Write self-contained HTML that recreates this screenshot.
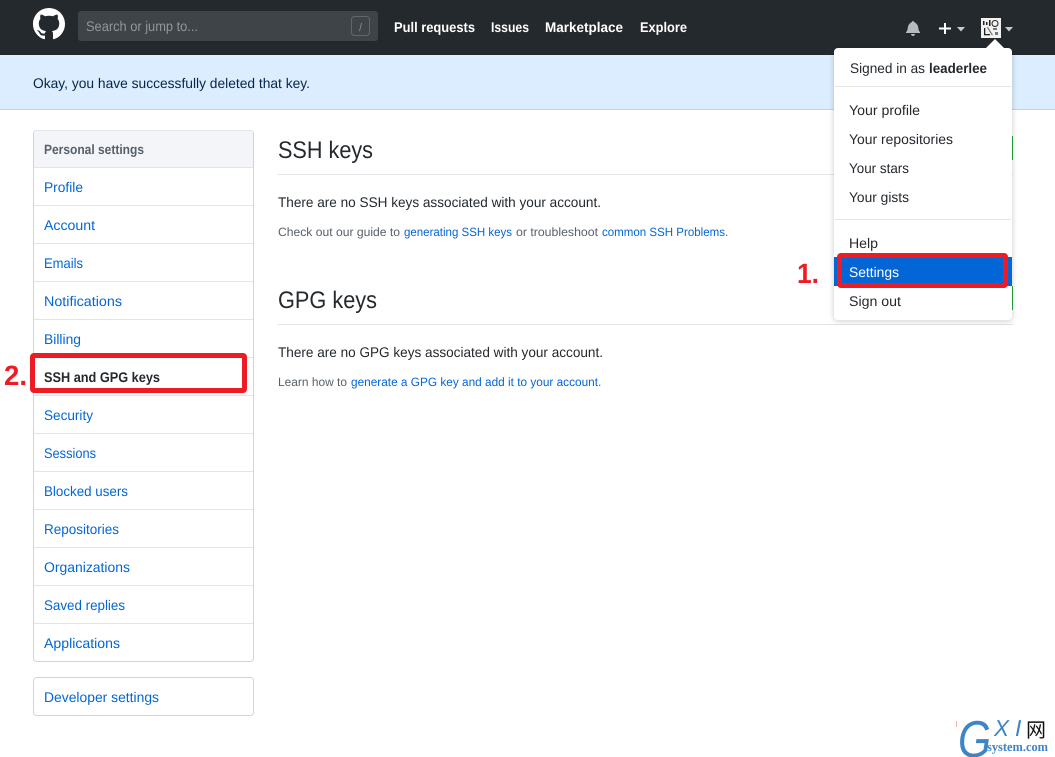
<!DOCTYPE html>
<html><head><meta charset="utf-8"><title>SSH and GPG keys</title>
<style>
html,body{margin:0;padding:0;background:#fff;width:1055px;height:757px;overflow:hidden}
svg{display:block}
text{font-family:"Liberation Sans","Noto Sans CJK SC",sans-serif;font-size:14px;fill:#24292e;text-rendering:geometricPrecision}
.l{fill:#0366d6}
.n{fill:#fff;font-weight:bold}
.s{font-size:12px;fill:#586069}
.sl{font-size:12px;fill:#0366d6}
</style></head><body>
<svg width="1055" height="757" viewBox="0 0 1055 757" xmlns="http://www.w3.org/2000/svg">
<defs><filter id="sh" x="-10%" y="-10%" width="120%" height="120%"><feDropShadow dx="0" dy="1" stdDeviation="3" flood-color="#1b1f23" flood-opacity=".22"/></filter></defs>
<rect width="1055" height="757" fill="#fff"/>
<!-- flash -->
<rect x="0" y="55" width="1055" height="54" fill="#dbedff"/>
<rect x="0" y="109" width="1055" height="1" fill="#c0d3eb"/>
<text x="33" y="88" textLength="277" lengthAdjust="spacingAndGlyphs" style="fill:#05264c">Okay, you have successfully deleted that key.</text>
<!-- header -->
<rect x="0" y="0" width="1055" height="55" fill="#24292e"/>
<g transform="translate(33 8) scale(2)"><path fill="#fff" d="M8 0C3.58 0 0 3.58 0 8c0 3.54 2.29 6.53 5.47 7.59.4.07.55-.17.55-.38 0-.19-.01-.82-.01-1.49-2.01.37-2.53-.49-2.69-.94-.09-.23-.48-.94-.82-1.13-.28-.15-.68-.52-.01-.53.63-.01 1.08.58 1.23.82.72 1.21 1.87.87 2.33.66.07-.52.28-.87.51-1.07-1.78-.2-3.64-.89-3.64-3.95 0-.87.31-1.59.82-2.15-.08-.2-.36-1.02.08-2.12 0 0 .67-.21 2.2.82.64-.18 1.32-.27 2-.27.68 0 1.36.09 2 .27 1.53-1.04 2.2-.82 2.2-.82.44 1.1.16 1.92.08 2.12.51.56.82 1.27.82 2.15 0 3.07-1.87 3.75-3.65 3.95.29.25.54.73.54 1.48 0 1.07-.01 1.93-.01 2.2 0 .21.15.46.55.38A8.013 8.013 0 0016 8c0-4.42-3.58-8-8-8z"/></g>
<rect x="78" y="11" width="300" height="30" rx="3" fill="#3f4448"/>
<text x="86" y="31" textLength="112" lengthAdjust="spacingAndGlyphs" style="fill:#92969a">Search or jump to...</text>
<rect x="351.500" y="16.500" width="18" height="19" rx="3" fill="none" stroke="#63676b"/>
<text x="359" y="31" style="font-size:11px;fill:#8a8e92">/</text>
<text class="n" x="394" y="32" textLength="81" lengthAdjust="spacingAndGlyphs">Pull requests</text>
<text class="n" x="491" y="32" textLength="38" lengthAdjust="spacingAndGlyphs">Issues</text>
<text class="n" x="545" y="32" textLength="78" lengthAdjust="spacingAndGlyphs">Marketplace</text>
<text class="n" x="640" y="32" textLength="47" lengthAdjust="spacingAndGlyphs">Explore</text>
<g transform="translate(906 20)"><path fill="#b8babc" d="M14 12v1H0v-1l.73-.58c.77-.77.81-2.55 1.19-4.42C2.69 3.23 6 2 6 2c0-.55.45-1 1-1s1 .45 1 1c0 0 3.39 1.23 4.16 5 .38 1.880 .42 3.660 1.190 4.420l.66.58H14zm-7 4c1.110 0 2-.89 2-2H5c0 1.110.89 2 2 2z"/></g>
<path fill="#fff" d="M944 23h2v4.500h5v2h-5V34h-2v-4.500h-5v-2h5z"/>
<path fill="#c8cacb" d="M957 27h8l-4 4.500z"/>
<!-- avatar -->
<rect x="981" y="18" width="20" height="20" fill="#f2f2f2"/>
<g fill="#222">
<rect x="983" y="21" width="1.500" height="4"/><rect x="986" y="22" width="1.500" height="3"/><rect x="989" y="20" width="1.500" height="6"/>
<circle cx="995" cy="23.500" r="3" fill="none" stroke="#222" stroke-width="1"/>
<rect x="984" y="28" width="1.300" height="7"/><rect x="984" y="34" width="6" height="1.300"/>
<path d="M988 27l5 8-1.200.4-5-8zM993 28h4v2h-4zM995 32h3v3h-3z" fill="#777"/>
</g>
<path fill="#c8cacb" d="M1005 27h8l-4 4.500z"/>
<!-- sidebar -->
<rect x="33.500" y="130.500" width="220" height="531" rx="3" fill="#fff" stroke="#d1d5da"/>
<path d="M34 167V133a2.500 2.500 0 0 1 2.500-2.500H250.500a2.500 2.500 0 0 1 2.500 2.500V167z" fill="#f3f5f8"/>
<g fill="#e1e4e8">
<rect x="34" y="167" width="219" height="1"/><rect x="34" y="205" width="219" height="1"/><rect x="34" y="243" width="219" height="1"/><rect x="34" y="281" width="219" height="1"/><rect x="34" y="319" width="219" height="1"/><rect x="34" y="357" width="219" height="1"/><rect x="34" y="395" width="219" height="1"/><rect x="34" y="433" width="219" height="1"/><rect x="34" y="471" width="219" height="1"/><rect x="34" y="509" width="219" height="1"/><rect x="34" y="547" width="219" height="1"/><rect x="34" y="585" width="219" height="1"/><rect x="34" y="623" width="219" height="1"/>
</g>
<text x="44" y="154" textLength="100" lengthAdjust="spacingAndGlyphs" style="font-size:13.500px;font-weight:bold;fill:#586069">Personal settings</text>
<text class="l" x="44" y="192" textLength="39" lengthAdjust="spacingAndGlyphs">Profile</text>
<text class="l" x="44" y="230" textLength="51" lengthAdjust="spacingAndGlyphs">Account</text>
<text class="l" x="44" y="268" textLength="39" lengthAdjust="spacingAndGlyphs">Emails</text>
<text class="l" x="44" y="306" textLength="78" lengthAdjust="spacingAndGlyphs">Notifications</text>
<text class="l" x="44" y="344" textLength="37" lengthAdjust="spacingAndGlyphs">Billing</text>
<text x="44" y="382" textLength="116" lengthAdjust="spacingAndGlyphs" style="font-weight:bold;font-size:14px">SSH and GPG keys</text>
<text class="l" x="44" y="420" textLength="49" lengthAdjust="spacingAndGlyphs">Security</text>
<text class="l" x="44" y="458" textLength="52" lengthAdjust="spacingAndGlyphs">Sessions</text>
<text class="l" x="44" y="496" textLength="84" lengthAdjust="spacingAndGlyphs">Blocked users</text>
<text class="l" x="44" y="534" textLength="75" lengthAdjust="spacingAndGlyphs">Repositories</text>
<text class="l" x="44" y="572" textLength="86" lengthAdjust="spacingAndGlyphs">Organizations</text>
<text class="l" x="44" y="610" textLength="81" lengthAdjust="spacingAndGlyphs">Saved replies</text>
<text class="l" x="44" y="648" textLength="76" lengthAdjust="spacingAndGlyphs">Applications</text>
<rect x="33.500" y="677.500" width="220" height="38" rx="3" fill="#fff" stroke="#d1d5da"/>
<text class="l" x="44" y="702" textLength="115" lengthAdjust="spacingAndGlyphs">Developer settings</text>
<!-- main -->
<text x="278" y="158" textLength="95" lengthAdjust="spacingAndGlyphs" style="font-size:24px">SSH keys</text>
<rect x="278" y="174" width="735" height="1" fill="#e1e4e8"/>
<rect x="1011" y="136" width="2" height="24" fill="#28a745"/>
<text x="278" y="207" textLength="323" lengthAdjust="spacingAndGlyphs">There are no SSH keys associated with your account.</text>
<text class="s" x="278" y="236" textLength="122" lengthAdjust="spacingAndGlyphs">Check out our guide to</text>
<text class="sl" x="404" y="236" textLength="108" lengthAdjust="spacingAndGlyphs">generating SSH keys</text>
<text class="s" x="516" y="236" textLength="82" lengthAdjust="spacingAndGlyphs">or troubleshoot</text>
<text class="sl" x="602" y="236" textLength="123" lengthAdjust="spacingAndGlyphs">common SSH Problems</text>
<text class="s" x="725" y="236">.</text>
<text x="278" y="308" textLength="99" lengthAdjust="spacingAndGlyphs" style="font-size:24px">GPG keys</text>
<rect x="278" y="324" width="735" height="1" fill="#e1e4e8"/>
<rect x="1011" y="286" width="2" height="24" fill="#28a745"/>
<text x="278" y="357" textLength="325" lengthAdjust="spacingAndGlyphs">There are no GPG keys associated with your account.</text>
<text class="s" x="278" y="386" textLength="69" lengthAdjust="spacingAndGlyphs">Learn how to</text>
<text class="sl" x="351" y="386" textLength="247" lengthAdjust="spacingAndGlyphs">generate a GPG key and add it to your account</text>
<text class="s" x="598" y="386">.</text>
<!-- dropdown -->
<rect x="834" y="48" width="178" height="272" rx="4" fill="#fff" filter="url(#sh)"/>
<path d="M995 39l9 9h-18z" fill="#fff"/>
<rect x="835" y="86" width="176" height="1" fill="#e1e4e8"/>
<rect x="835" y="219" width="176" height="1" fill="#e1e4e8"/>
<text x="850" y="73" textLength="75" lengthAdjust="spacingAndGlyphs">Signed in as</text>
<text x="929" y="73" textLength="58" lengthAdjust="spacingAndGlyphs" style="font-weight:bold">leaderlee</text>
<text x="849" y="115" textLength="71" lengthAdjust="spacingAndGlyphs">Your profile</text>
<text x="849" y="144" textLength="104" lengthAdjust="spacingAndGlyphs">Your repositories</text>
<text x="849" y="173" textLength="60" lengthAdjust="spacingAndGlyphs">Your stars</text>
<text x="849" y="202" textLength="60" lengthAdjust="spacingAndGlyphs">Your gists</text>
<text x="849" y="248" textLength="29" lengthAdjust="spacingAndGlyphs">Help</text>
<rect x="834" y="257" width="178" height="29" fill="#0366d6"/>
<text x="849" y="277" textLength="50" lengthAdjust="spacingAndGlyphs" style="fill:#fff">Settings</text>
<text x="849" y="306" textLength="52" lengthAdjust="spacingAndGlyphs">Sign out</text>
<!-- annotations -->
<rect x="839.500" y="255.500" width="166" height="30" rx="1.500" fill="none" stroke="#ed1c24" stroke-width="5"/>
<rect x="32.500" y="355.500" width="212" height="35" rx="1.500" fill="none" stroke="#ed1c24" stroke-width="5"/>
<text x="797" y="283" textLength="22" lengthAdjust="spacingAndGlyphs" style="font-size:28px;font-weight:bold;fill:#ed1c24">1.</text>
<text x="4" y="385" textLength="23" lengthAdjust="spacingAndGlyphs" style="font-size:28px;font-weight:bold;fill:#ed1c24">2.</text>
<!-- watermark -->
<rect x="956" y="721" width="1" height="6" fill="#f3b0b0"/>
<text x="958" y="757" textLength="33" lengthAdjust="spacingAndGlyphs" style="font-size:52px;font-style:italic;fill:#3f85c6">G</text>
<text x="994" y="736" textLength="15" lengthAdjust="spacingAndGlyphs" style="font-size:23px;font-style:italic;fill:#3f85c6">X</text>
<text x="1015" y="736" style="font-size:23px;font-style:italic;fill:#3f85c6">I</text>
<text x="1026" y="737" style="font-size:20px;fill:#111;font-family:'Noto Sans CJK SC',sans-serif">网</text>
<text x="987" y="751" textLength="61" lengthAdjust="spacingAndGlyphs" style="font-family:'Liberation Serif',serif;font-size:13px;font-weight:bold;fill:#3f85c6">system.com</text>
</svg>
</body></html>
